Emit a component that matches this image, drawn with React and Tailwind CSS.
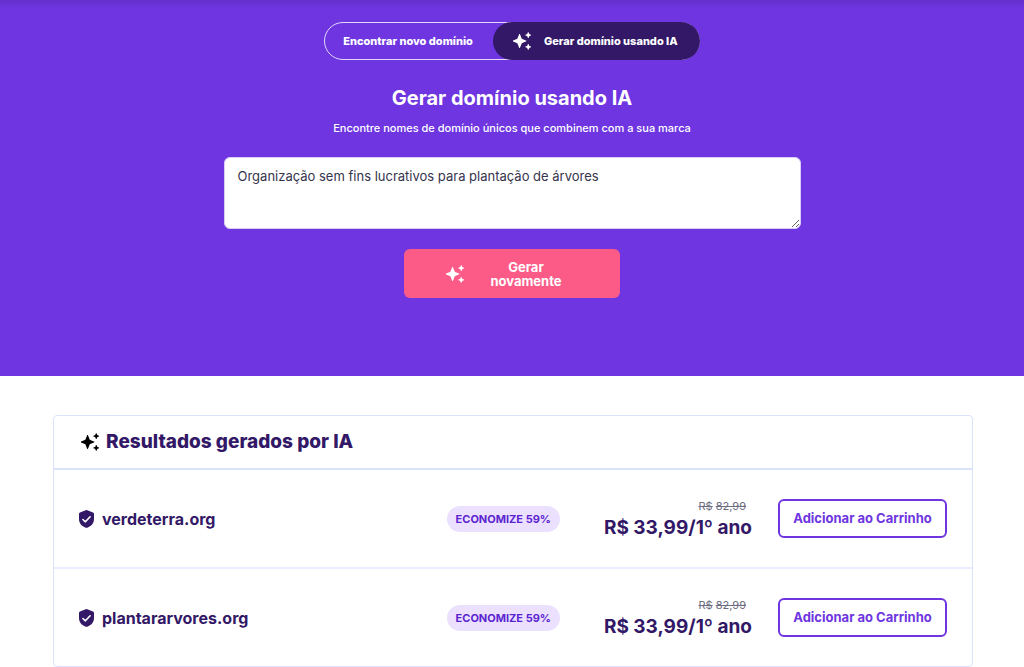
import { useState } from 'react'

const resultados = [
  { dominio: 'verdeterra.org', desconto: 'ECONOMIZE 59%', antes: '82,99', agora: '33,99' },
  { dominio: 'plantararvores.org', desconto: 'ECONOMIZE 59%', antes: '82,99', agora: '33,99' },
]

function Sparkles({ className }) {
  return (
    <svg viewBox="0 0 17 17" fill="currentColor" aria-hidden="true" className={className}>
      <path d="M5.900 2h.6l1.600 3.900q.2.500.7.700l3.900 1.600v.6L8.800 10.400q-.5.200-.7.700L6.500 15h-.6l-1.600-3.900q-.2-.5-.7-.7L-.2 8.800v-.6l3.800-1.600q.5-.2.700-.7z" />
      <path d="M14.100.2h.6l.6 1.500q.1.300.4.400l1.400.5v.6l-1.400.5q-.3.100-.4.400l-.6 1.500h-.6l-.6-1.500q-.1-.3-.4-.4l-1.400-.5v-.6l1.400-.5q.3-.1.400-.4z" />
      <path d="M14.100 11.400h.6l.6 1.500q.1.300.4.400l1.400.5v.6l-1.400.5q-.3.100-.4.400l-.6 1.500h-.6l-.6-1.500q-.1-.3-.4-.4l-1.400-.5v-.6l1.400-.5q.3-.1.400-.4z" />
    </svg>
  )
}

function Shield() {
  return (
    <svg viewBox="0 0 15 18" aria-hidden="true" className="h-[18px] w-[15px] shrink-0">
      <path
        fill="currentColor"
        d="M6.700.3q.8-.4 1.600 0l5.700 2.200q1 .4 1 1.400v5.200c0 4.200-2.800 7.300-6.700 8.600q-.8.300-1.600 0C2.800 16.400 0 13.300 0 9.100V3.900q0-1 1-1.400z"
      />
      <path fill="none" stroke="#fff" strokeWidth="1.600" strokeLinecap="round" strokeLinejoin="round" d="M3.900 9.500l2.500 2.300 4.700-5" />
    </svg>
  )
}

export default function App() {
  const [modo, setModo] = useState('ia')
  const [descricao, setDescricao] = useState('Organização sem fins lucrativos para plantação de árvores')

  return (
    <div className="min-h-screen bg-white font-['Inter',sans-serif]">
      <section className="flex flex-col items-center bg-[#6e35e0] bg-linear-to-b from-[#6530cb] to-[#6e35e0] to-[8px] px-6 pt-[22px] pb-[78px] text-white">
        <div className="flex h-[38px] rounded-full border border-white/80 text-[11px] font-extrabold">
          <button type="button" aria-pressed={modo === 'busca'} onClick={() => setModo('busca')} className="pr-5 pl-[18px]">
            Encontrar novo domínio
          </button>
          <button
            type="button"
            aria-pressed={modo === 'ia'}
            onClick={() => setModo('ia')}
            className="-my-px -mr-px flex items-center gap-[13px] rounded-full bg-[#321866] pr-[22px] pl-5"
          >
            <Sparkles className="size-[18px]" />
            Gerar domínio usando IA
          </button>
        </div>

        <h1 className="mt-6 text-[20px] leading-[28px] font-bold">Gerar domínio usando IA</h1>
        <p className="mt-[6px] text-[11px] leading-[20px] font-medium">
          Encontre nomes de domínio únicos que combinem com a sua marca
        </p>

        <textarea
          aria-label="Descrição da marca"
          value={descricao}
          onChange={(e) => setDescricao(e.target.value)}
          className="mt-[19px] h-[72px] w-full max-w-[577px] resize rounded-md border border-[#d9ccf7] bg-white px-[13px] py-2 text-[13px] leading-[20px] text-[#36344d] outline-none"
        />

        <button
          type="button"
          className="mt-5 flex h-[49px] w-[216px] items-center justify-center gap-[26px] rounded-md bg-[#fc5b88] pr-4 text-[13px] leading-[14px] font-bold"
        >
          <Sparkles className="size-[18px]" />
          <span>
            <span className="block">Gerar</span>
            <span className="block">novamente</span>
          </span>
        </button>
      </section>

      <main className="pt-[39px] pr-6 pl-[26px]">
        <div className="mx-auto w-full max-w-[920px] rounded-[4px] border border-[#dce2fc] text-[#321866]">
          <h2 className="flex h-[54px] items-center gap-[7px] border-b-2 border-[#dbe2fc] px-[27px] text-[19px] font-extrabold">
            <Sparkles className="size-[18px] text-black" />
            Resultados gerados por IA
          </h2>

          <ul>
            {resultados.map((r) => (
              <li
                key={r.dominio}
                className="grid h-[99px] grid-cols-[1fr_auto_192px_auto] items-center border-b-2 border-[#e9edfd] px-[25px] last:h-[97px] last:border-b-0"
              >
                <div className="flex items-center gap-2">
                  <Shield />
                  <span className="text-[16px] leading-6 font-bold">{r.dominio}</span>
                </div>
                <span className="rounded-full bg-[#ebe1fe] px-[9px] text-[11px] leading-[26px] font-bold text-[#5c24d0]">
                  {r.desconto}
                </span>
                <div className="pt-[2px] text-right">
                  <p className="pr-[6px] text-[11px] leading-[16px] text-[#6d6c82]">
                    <s>R$</s> <s>{r.antes}</s>
                  </p>
                  <p className="text-[19px] leading-[28px] font-bold">R$ {r.agora}/1º ano</p>
                </div>
                <button
                  type="button"
                  className="ml-[26px] h-[39px] w-[169px] rounded-md border-2 border-[#6e35e0] text-[13px] font-bold text-[#6e35e0]"
                >
                  Adicionar ao Carrinho
                </button>
              </li>
            ))}
          </ul>
        </div>
      </main>
    </div>
  )
}
